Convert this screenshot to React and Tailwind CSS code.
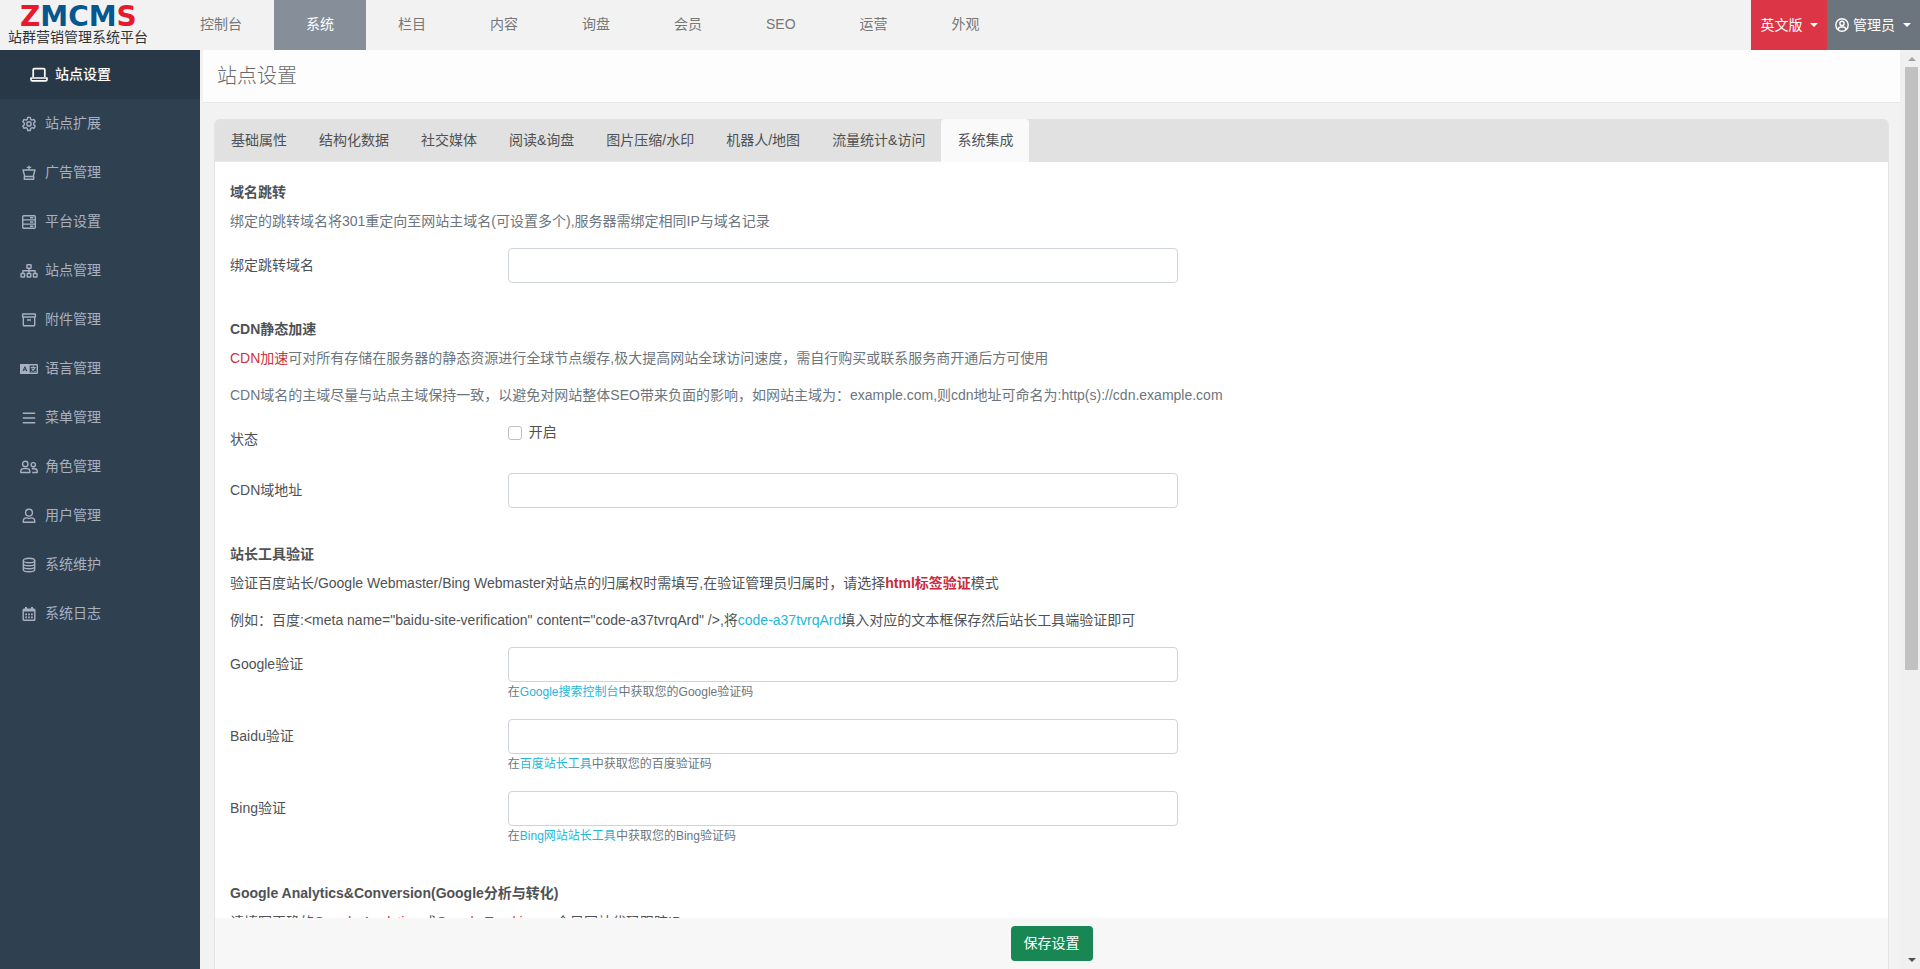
import { useState } from "react"

const topMenu = ["控制台", "系统", "栏目", "内容", "询盘", "会员", "SEO", "运营", "外观"]

const tabs = [
    "基础属性",
    "结构化数据",
    "社交媒体",
    "阅读&询盘",
    "图片压缩/水印",
    "机器人/地图",
    "流量统计&访问",
    "系统集成",
]

const icons = {
    laptop: (
        <>
            <path d="M3.2 10V2.800c0-.7.5-1.200 1.200-1.200h9.200c.7 0 1.200.5 1.200 1.200V10" strokeWidth="1.700" />
            <path d="M1 11h16v1.500c0 .8-.6 1.400-1.400 1.400H2.400c-.8 0-1.400-.6-1.400-1.400z" strokeWidth="1.700" />
        </>
    ),
    gear: (
        <>
            <path d="M7.7 1.4h2.6l.4 1.9 1.3.8 1.9-.7 1.3 2.3-1.5 1.3v1.8l1.5 1.3-1.3 2.3-1.9-.7-1.3.8-.4 2H7.7l-.4-2-1.3-.8-1.9.7-1.3-2.3 1.5-1.3V7L2.8 5.700l1.3-2.300 1.900.7 1.300-.8z" />
            <circle cx="9" cy="7.900" r="2.100" />
        </>
    ),
    pot: (
        <>
            <path d="M9 .8v4M6.800 2.400h4.400" />
            <path d="M3 5h12l-1.800 6.500H4.800zM4.300 11.500h9.400v2.700H4.300z" />
        </>
    ),
    server: (
        <>
            <rect x="2.700" y="1.700" width="12.600" height="12.600" rx="1" />
            <path d="M2.700 5.900h12.600M2.700 10.100h12.600" />
            <path d="M10 3.800h3.300M10 8h3.300M10 12.200h3.300" />
        </>
    ),
    sitemap: (
        <>
            <rect x="6.900" y="1.700" width="4.200" height="3.600" rx=".5" />
            <path d="M9 5.300v5M2.900 10V7.800h12.200V10" />
            <rect x="1" y="10.500" width="3.600" height="3.500" rx=".5" />
            <rect x="7.200" y="10.500" width="3.600" height="3.500" rx=".5" />
            <rect x="13.400" y="10.500" width="3.600" height="3.500" rx=".5" />
        </>
    ),
    archive: (
        <>
            <rect x="2.600" y="2" width="12.800" height="3" rx=".5" />
            <path d="M3.300 5v8c0 .5.300.8.800.8h9.800c.5 0 .8-.3.800-.8V5M7 8h4" />
        </>
    ),
    language: (
        <>
            <rect x=".7" y="3.700" width="16.600" height="8.600" rx=".6" />
            <path d="M.7 3.700H9v8.600H.7z" fill="currentColor" />
            <path d="m3 10.200 1.900-4.500 1.900 4.500M3.700 8.800h2.400" stroke="#2f4050" strokeWidth="1" />
            <path d="M10.800 6.500h5M13.300 5.200v1.300M15 6.500c-.6 2-2 3.200-3.800 4M11.700 7.500c.7 1.500 2 2.500 3.800 3" strokeWidth="1.100" />
        </>
    ),
    bars: <path d="M2.800 3.200h12.400M2.800 8h12.400M2.800 12.800h12.400" />,
    users: (
        <>
            <circle cx="5.300" cy="5" r="2.700" />
            <path d="M.8 13.500v-1.200c0-1.600 1.200-2.700 2.700-2.700h3.600c1.500 0 2.700 1.100 2.700 2.700v1.200z" />
            <circle cx="13.300" cy="5.700" r="2.100" />
            <path d="M11.800 9.800h2.600c1.600 0 2.800 1.100 2.800 2.500v1.200h-5" />
        </>
    ),
    user: (
        <>
            <circle cx="9" cy="4.700" r="3.400" />
            <path d="M3.300 14.300v-1.200c0-1.900 1.300-3.200 3.200-3.200.9 0 1.300.5 2.500.5s1.600-.5 2.500-.5c1.900 0 3.200 1.300 3.200 3.200v1.200z" />
        </>
    ),
    database: (
        <>
            <ellipse cx="9" cy="3.500" rx="5.700" ry="2.200" />
            <path d="M3.300 3.500v9c0 1.200 2.500 2.200 5.700 2.200s5.700-1 5.700-2.200v-9M3.300 6.500c0 1.200 2.500 2.200 5.700 2.200s5.700-1 5.700-2.200M3.300 9.500c0 1.200 2.500 2.200 5.700 2.200s5.700-1 5.700-2.200" />
        </>
    ),
    calendar: (
        <>
            <rect x="3.200" y="3.200" width="11.600" height="11" rx=".8" />
            <path d="M3.200 4.500h11.600M6 1v2M12 1v2" strokeWidth="2" />
            <path d="M5.200 8.300h7.600M5.200 11.300h7.600" strokeWidth="1.800" strokeDasharray="1.800 1.100" />
        </>
    ),
}

const sideMenu = [
    { icon: "laptop", label: "站点设置" },
    { icon: "gear", label: "站点扩展" },
    { icon: "pot", label: "广告管理" },
    { icon: "server", label: "平台设置" },
    { icon: "sitemap", label: "站点管理" },
    { icon: "archive", label: "附件管理" },
    { icon: "language", label: "语言管理" },
    { icon: "bars", label: "菜单管理" },
    { icon: "users", label: "角色管理" },
    { icon: "user", label: "用户管理" },
    { icon: "database", label: "系统维护" },
    { icon: "calendar", label: "系统日志" },
]

function SideIcon({ name }) {
    return (
        <svg
            className="h-4 w-[18px] shrink-0"
            viewBox="0 0 18 16"
            fill="none"
            stroke="currentColor"
            strokeWidth="1.4"
            strokeLinejoin="round"
            aria-hidden="true"
        >
            {icons[name]}
        </svg>
    )
}

function Caret() {
    return <span className="border-x-4 border-t-4 border-x-transparent border-t-white" />
}

function Header() {
    return (
        <header className="flex h-[50px] shrink-0 justify-between bg-[#f2f2f2]">
            <div className="flex">
                <a href="#" className="flex w-[168px] flex-col pt-1.5 pl-2">
                    <span className="pl-3 font-[DejaVu_Sans,sans-serif] text-[28px] leading-[22px] font-bold text-[#04588f]">
                        <span className="text-[#e8192c]">Z</span>MCM<span className="text-[#e8192c]">S</span>
                    </span>
                    <span className="text-sm leading-[18px] whitespace-nowrap text-[#333]">站群营销管理系统平台</span>
                </a>
                <nav className="flex">
                    {topMenu.map((item) => (
                        <a
                            key={item}
                            href="#"
                            className={`flex items-center px-8 pb-0.5 whitespace-nowrap ${
                                item === "系统" ? "bg-[#868e99] text-white" : "text-[#777]"
                            }`}
                        >
                            {item}
                        </a>
                    ))}
                </nav>
            </div>
            <div className="flex text-white">
                <button type="button" className="flex w-[76px] items-center justify-center gap-[7px] bg-[#dc3545]">
                    英文版
                    <Caret />
                </button>
                <button type="button" className="flex w-[93px] items-center gap-1 bg-[#6c757d] pl-2">
                    <svg className="size-[14px]" viewBox="0 0 14 14" fill="none" stroke="currentColor" strokeWidth="1.400">
                        <circle cx="7" cy="7" r="6.200" />
                        <circle cx="7" cy="5.400" r="2.100" />
                        <path d="M3.200 11.600c.3-1.700 1.200-2.600 2.500-2.600h2.600c1.300 0 2.200.9 2.500 2.600" />
                    </svg>
                    <span className="pr-1">管理员</span>
                    <Caret />
                </button>
            </div>
        </header>
    )
}

function Sidebar() {
    return (
        <aside className="w-[200px] shrink-0 bg-[#2f4050]">
            {sideMenu.map(({ icon, label }, index) => (
                <a
                    key={label}
                    href="#"
                    className={`flex h-[49px] items-center gap-[7px] ${
                        index === 0 ? "bg-[#293846] pl-[30px] font-medium text-white" : "pl-5 text-[#a7b1c2]"
                    }`}
                >
                    <SideIcon name={icon} />
                    {label}
                </a>
            ))}
        </aside>
    )
}

function Section({ title, children }) {
    return (
        <section className="flex flex-col pb-5">
            <h2 className="mb-2 font-bold">{title}</h2>
            {children}
        </section>
    )
}

function Field({ id, label, children }) {
    return (
        <div className="mb-4 grid grid-cols-12 gap-6">
            <label htmlFor={id} className="col-span-2 py-[7px]">
                {label}
            </label>
            <div className="col-span-5">
                <input id={id} type="text" className="block h-[35px] w-full rounded border border-[#ced4da] bg-white px-3" />
                {children && <p className="text-xs leading-[21px] text-[#6c757d]">{children}</p>}
            </div>
        </div>
    )
}

function HelpLink({ children }) {
    return (
        <a href="#" className="text-[#23b7d9]">
            {children}
        </a>
    )
}

function Scrollbar() {
    return (
        <div className="flex w-[20px] shrink-0 flex-col items-center bg-[#f0f0f0] pt-[7px] pb-[7px] pl-[3px]" aria-hidden="true">
            <span className="mb-1.5 border-x-4 border-b-4 border-x-transparent border-b-[#a3a3a3]" />
            <span className="w-[13px] basis-2/3 bg-[#c1c1c1]" />
            <span className="mt-auto border-x-4 border-t-4 border-x-transparent border-t-[#505050]" />
        </div>
    )
}

export default function App() {
    const [activeTab, setActiveTab] = useState("系统集成")

    return (
        <div className="flex h-screen flex-col overflow-hidden bg-[#f2f2f2] font-[Liberation_Sans,Noto_Sans_CJK_SC,sans-serif] text-sm leading-[21px] text-[#4f5254]">
            <Header />
            <div className="flex min-h-0 flex-1">
                <Sidebar />
                <main className="ml-[3px] flex min-w-0 flex-1 flex-col">
                    <h1 className="h-[53px] shrink-0 border-b border-[#e7e7e7] bg-[#fdfdfd] px-3.5 text-xl leading-[52px] font-light text-[#676a6c]">
                        站点设置
                    </h1>
                    <div className="mx-[11px] mt-4 min-h-0 flex-1 overflow-y-auto rounded-t-md border-x border-[#e4e4e4] bg-white [scrollbar-width:none]">
                        <div className="flex h-[43px] bg-[#e1e1e1]" role="tablist">
                            {tabs.map((tab) => (
                                <button
                                    key={tab}
                                    type="button"
                                    role="tab"
                                    aria-selected={tab === activeTab}
                                    onClick={() => setActiveTab(tab)}
                                    className={`px-4 whitespace-nowrap ${
                                        tab === activeTab ? "rounded-t bg-[#fafafa]" : "border-b border-[#e9e9e9]"
                                    }`}
                                >
                                    {tab}
                                </button>
                            ))}
                        </div>
                        <form className="px-[15px] pt-5">
                            <Section title="域名跳转">
                                <p className="mb-4 text-[#6c757d]">
                                    绑定的跳转域名将301重定向至网站主域名(可设置多个),服务器需绑定相同IP与域名记录
                                </p>
                                <Field id="redirect-domain" label="绑定跳转域名" />
                            </Section>

                            <Section title="CDN静态加速">
                                <p className="mb-4 text-[#6c757d]">
                                    <span className="text-[#cb3440]">CDN加速</span>
                                    可对所有存储在服务器的静态资源进行全球节点缓存,极大提高网站全球访问速度，需自行购买或联系服务商开通后方可使用
                                </p>
                                <p className="mb-4 text-[#6c757d]">
                                    CDN域名的主域尽量与站点主域保持一致，以避免对网站整体SEO带来负面的影响，如网站主域为：example.com,则cdn地址可命名为:http(s)://cdn.example.com
                                </p>
                                <div className="mb-4 grid grid-cols-12 gap-6">
                                    <span className="col-span-2 py-[7px]">状态</span>
                                    <label className="col-span-5 flex h-[21px] items-center gap-[7px]">
                                        <input type="checkbox" className="size-[14px] appearance-none rounded-[3px] border border-[#bfbfbf] checked:bg-[#0d6efd]" />
                                        开启
                                    </label>
                                </div>
                                <Field id="cdn-domain" label="CDN域地址" />
                            </Section>

                            <Section title="站长工具验证">
                                <p className="mb-4">
                                    验证百度站长/Google Webmaster/Bing Webmaster对站点的归属权时需填写,在验证管理员归属时，请选择
                                    <strong className="text-[#cb2a3a]">html标签验证</strong>模式
                                </p>
                                <p className="mb-4">
                                    例如：百度:&lt;meta name="baidu-site-verification" content="code-a37tvrqArd" /&gt;,将
                                    <span className="text-[#23b7d9]">code-a37tvrqArd</span>
                                    填入对应的文本框保存然后站长工具端验证即可
                                </p>
                                <Field id="google-code" label="Google验证">
                                    在<HelpLink>Google搜索控制台</HelpLink>中获取您的Google验证码
                                </Field>
                                <Field id="baidu-code" label="Baidu验证">
                                    在<HelpLink>百度站长工具</HelpLink>中获取您的百度验证码
                                </Field>
                                <Field id="bing-code" label="Bing验证">
                                    在<HelpLink>Bing网站站长工具</HelpLink>中获取您的Bing验证码
                                </Field>
                            </Section>

                            <Section title="Google Analytics&Conversion(Google分析与转化)">
                                <p className="mb-4">
                                    请填写正确的<span className="text-[#cb3440]">Google Analytics</span> 或
                                    <span className="text-[#cb3440]">Google Tracking</span>， 全局网站代码跟踪ID
                                </p>
                            </Section>
                        </form>
                    </div>
                    <footer className="mx-[11px] flex h-[51px] shrink-0 items-center justify-center border-x border-[#e4e4e4] bg-[#f7f7f7]">
                        <button type="button" className="h-[35px] rounded bg-[#198754] px-[13px] text-white">
                            保存设置
                        </button>
                    </footer>
                </main>
                <Scrollbar />
            </div>
        </div>
    )
}
